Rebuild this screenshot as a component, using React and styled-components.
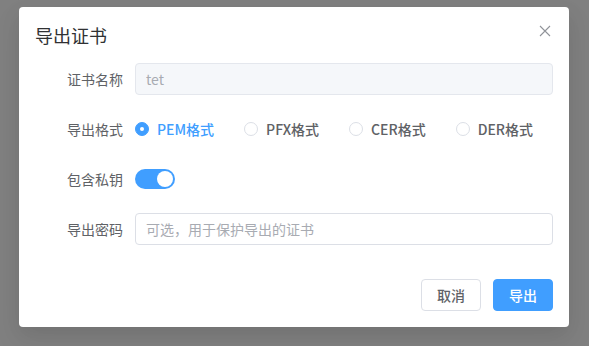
import React from "react";
import styled, { createGlobalStyle } from "styled-components";

const Global = createGlobalStyle`
  html, body { margin: 0; padding: 0; }
  body {
    background: #808080;
    font-family: "Noto Sans CJK SC", "Noto Sans", sans-serif;
    width: 589px; height: 346px; overflow: hidden;
  }
`;

const Page = styled.div`
  padding: 7px 0 0 19px;
`;

const Dialog = styled.div`
  width: 550px;
  box-sizing: border-box;
  background: #fff;
  border-radius: 4px;
  padding: 16px;
  position: relative;
  box-shadow: 0 12px 32px 4px rgba(0,0,0,0.04), 0 8px 20px rgba(0,0,0,0.08);
`;

const Header = styled.div`
  padding-bottom: 16px;
`;

const Title = styled.div`
  font-size: 18px;
  line-height: 24px;
  color: #303133;
`;

const CloseBtn = styled.button`
  position: absolute;
  top: 0;
  right: 0;
  width: 48px;
  height: 48px;
  border: none;
  background: transparent;
  padding: 0;
  display: flex;
  align-items: center;
  justify-content: center;
  color: #909399;
`;

const FormItem = styled.div`
  display: flex;
  align-items: center;
  min-height: 32px;
  margin-bottom: 18px;
`;

const Label = styled.label`
  width: 100px;
  box-sizing: border-box;
  padding-right: 12px;
  text-align: right;
  font-size: 14px;
  line-height: 32px;
  color: #606266;
  flex-shrink: 0;
`;

const Content = styled.div`
  flex: 1;
  display: flex;
  align-items: center;
  min-height: 32px;
`;

const Input = styled.input`
  width: 100%;
  height: 32px;
  box-sizing: border-box;
  border-radius: 4px;
  border: 1px solid ${(p) => (p.disabled ? "#e4e7ed" : "#dcdfe6")};
  background: ${(p) => (p.disabled ? "#f5f7fa" : "#fff")};
  color: ${(p) => (p.disabled ? "#a8abb2" : "#606266")};
  padding: 0 10px;
  font-family: inherit;
  font-size: 14px;
  outline: none;
  &::placeholder { color: #a8abb2; }
`;

const RadioGroup = styled.div`
  display: flex;
  align-items: center;
`;

const Radio = styled.div`
  display: flex;
  align-items: center;
  margin-right: 30px;
  height: 32px;
  &:last-child { margin-right: 0; }
`;

const RadioCircle = styled.span`
  width: 14px;
  height: 14px;
  box-sizing: border-box;
  border-radius: 50%;
  border: 1px solid ${(p) => (p.checked ? "#409eff" : "#dcdfe6")};
  background: ${(p) => (p.checked ? "#409eff" : "#fff")};
  display: flex;
  align-items: center;
  justify-content: center;
  &::after {
    content: "";
    width: 4px;
    height: 4px;
    border-radius: 50%;
    background: #fff;
    display: ${(p) => (p.checked ? "block" : "none")};
  }
`;

const RadioLabel = styled.span`
  padding-left: 8px;
  font-size: 14px;
  font-weight: 500;
  color: ${(p) => (p.checked ? "#409eff" : "#606266")};
`;

const Switch = styled.span`
  width: 40px;
  height: 20px;
  box-sizing: border-box;
  border-radius: 10px;
  background: #409eff;
  display: flex;
  align-items: center;
  justify-content: flex-end;
  padding: 0 2px;
`;

const Knob = styled.span`
  width: 16px;
  height: 16px;
  border-radius: 50%;
  background: #fff;
`;

const Footer = styled.div`
  padding-top: 16px;
  display: flex;
  justify-content: flex-end;
  gap: 12px;
`;

const Button = styled.button`
  height: 32px;
  padding: 8px 15px;
  box-sizing: border-box;
  border-radius: 4px;
  font-family: inherit;
  font-size: 14px;
  line-height: 14px;
  font-weight: 500;
  border: 1px solid ${(p) => (p.primary ? "#409eff" : "#dcdfe6")};
  background: ${(p) => (p.primary ? "#409eff" : "#fff")};
  color: ${(p) => (p.primary ? "#fff" : "#606266")};
`;

const formats = ["PEM格式", "PFX格式", "CER格式", "DER格式"];

export default function App() {
  return (
    <Page>
      <Global />
      <Dialog>
        <Header>
          <Title>导出证书</Title>
          <CloseBtn aria-label="close">
            <svg width="12" height="12" viewBox="0 0 12 12">
              <path d="M1 1L11 11M11 1L1 11" stroke="currentColor" strokeWidth="1.1" fill="none" />
            </svg>
          </CloseBtn>
        </Header>
        <div>
          <FormItem>
            <Label>证书名称</Label>
            <Content>
              <Input disabled value="tet" readOnly />
            </Content>
          </FormItem>
          <FormItem>
            <Label>导出格式</Label>
            <Content>
              <RadioGroup>
                {formats.map((f, i) => (
                  <Radio key={f}>
                    <RadioCircle checked={i === 0} />
                    <RadioLabel checked={i === 0}>{f}</RadioLabel>
                  </Radio>
                ))}
              </RadioGroup>
            </Content>
          </FormItem>
          <FormItem>
            <Label>包含私钥</Label>
            <Content>
              <Switch>
                <Knob />
              </Switch>
            </Content>
          </FormItem>
          <FormItem>
            <Label>导出密码</Label>
            <Content>
              <Input placeholder="可选，用于保护导出的证书" />
            </Content>
          </FormItem>
        </div>
        <Footer>
          <Button>取消</Button>
          <Button primary>导出</Button>
        </Footer>
      </Dialog>
    </Page>
  );
}
